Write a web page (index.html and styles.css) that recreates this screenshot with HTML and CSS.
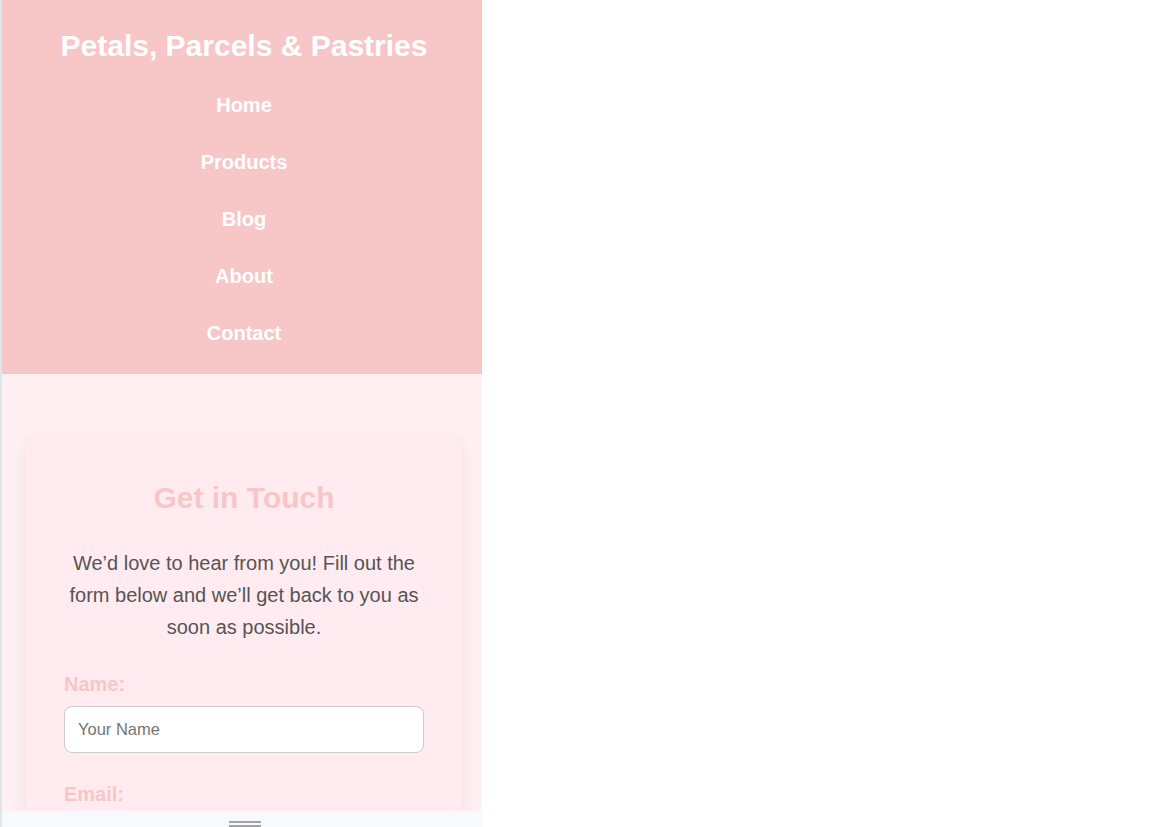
FILE: index.html
```html
<!DOCTYPE html>
<html lang="en">
<head>
<meta charset="utf-8">
<title>Petals, Parcels &amp; Pastries</title>
<link rel="stylesheet" href="styles.css">
</head>
<body>
<div class="frame">
  <div class="viewport">
    <div class="page">
      <header class="site-header">
        <h1 class="site-title">Petals, Parcels &amp; Pastries</h1>
        <nav>
          <ul class="nav-list">
            <li><a href="#">Home</a></li>
            <li><a href="#">Products</a></li>
            <li><a href="#">Blog</a></li>
            <li><a href="#">About</a></li>
            <li><a href="#">Contact</a></li>
          </ul>
        </nav>
      </header>
      <main class="main">
        <section class="card">
          <h2 class="card-title">Get in Touch</h2>
          <p class="card-text">We’d love to hear from you! Fill out the form below and we’ll get back to you as soon as possible.</p>
          <form class="form">
            <label class="label" for="name">Name:</label>
            <input class="input" id="name" type="text" placeholder="Your Name">
            <label class="label" for="email">Email:</label>
            <input class="input" id="email" type="email" placeholder="Your Email">
          </form>
        </section>
      </main>
    </div>
    <div class="drawer-bar"><span class="handle"></span></div>
  </div>
</div>
</body>
</html>
```

FILE: styles.css
```css
* { box-sizing: border-box; }
html, body { margin: 0; padding: 0; background: #ffffff; }
body { font-family: "Liberation Sans", Arial, sans-serif; }

.frame {
  width: 482px;
  height: 827px;
  border-left: 2px solid #dfe6ee;
}
.viewport {
  position: relative;
  width: 480px;
  height: 827px;
  overflow: hidden;
  background: #fff0f3;
}
.page { width: 484px; }

.site-header {
  background: #f7c6c7;
  padding: 29px 0 12px;
  text-align: center;
}
.site-title {
  margin: 0 0 14px;
  font-size: 30px;
  line-height: 34px;
  font-weight: 700;
  color: #ffffff;
}
.nav-list { list-style: none; margin: 0; padding: 0; }
.nav-list a {
  display: block;
  padding: 17px 0;
  line-height: 23px;
  font-size: 20px;
  font-weight: 700;
  color: #ffffff;
  text-decoration: none;
}

.main { padding: 62px 24px 40px; }
.card {
  background: #ffebf0;
  border-radius: 15px;
  box-shadow: 0 4px 16px rgba(0, 0, 0, 0.08);
  padding: 45px 38px 38px;
}
.card-title {
  margin: 0;
  text-align: center;
  font-size: 30px;
  line-height: 34px;
  font-weight: 700;
  color: #f7c6c7;
}
.card-text {
  margin: 32px 0 0;
  text-align: center;
  font-size: 20px;
  line-height: 32px;
  color: #555555;
}
.form { display: flex; flex-direction: column; margin-top: 30px; }
.label {
  font-size: 20px;
  line-height: 23px;
  font-weight: 700;
  color: #f7c6c7;
  margin-bottom: 10px;
}
.input {
  height: 47px;
  padding: 0 13px;
  border: 1px solid #cccccc;
  border-radius: 8px;
  background: #ffffff;
  font-family: "Liberation Sans", Arial, sans-serif;
  font-size: 16.5px;
  color: #333;
  margin-bottom: 30px;
}
.input::placeholder { color: #757575; }

.drawer-bar {
  position: absolute;
  left: 0;
  right: 0;
  bottom: 0;
  height: 16px;
  background: #f8f9fc;
  display: flex;
  justify-content: center;
  padding: 10px 0 0 6px;
}
.handle {
  width: 32px;
  height: 6px;
  border-top: 2px solid #a3a3a3;
  border-bottom: 2px solid #a3a3a3;
}
```
